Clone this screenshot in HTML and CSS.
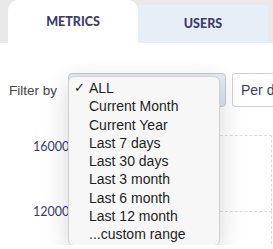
FILE: index.html
```html
<!DOCTYPE html>
<html>
    <head>
        <title>Metrics</title>
        <meta charset="UTF-8">
        <link rel="stylesheet" href="styles.css">
    </head>
    <body>
        <div class='tabs'>
            <div class='tab active'>METRICS</div>
            <div class='tab'>USERS</div>
        </div>

        <div class='panel'>
            <div class='filters'>
                <span class='filter_label'>Filter by</span>
                <div class='select_box'></div>
                <div class='per_box'>Per day</div>

                <ul class='menu'>
                    <li><span class='check'>&#10003;</span>ALL</li>
                    <li>Current Month</li>
                    <li>Current Year</li>
                    <li>Last 7 days</li>
                    <li>Last 30 days</li>
                    <li>Last 3 month</li>
                    <li>Last 6 month</li>
                    <li>Last 12 month</li>
                    <li>...custom range</li>
                </ul>
            </div>

            <div class='chart'>
                <div class='y_axis'>
                    <span class='tick'>16000</span>
                    <span class='tick'>12000</span>
                </div>
                <div class='plot'>
                    <div class='grid_row'></div>
                    <div class='grid_row'></div>
                    <div class='bar'></div>
                </div>
            </div>
        </div>
    </body>
</html>
```

FILE: styles.css
```css
body {
    margin: 0;
    background: #ffffff;
    font-family: "Liberation Sans", Arial, sans-serif;
    overflow: hidden;
}
.tabs {
    display: flex;
    align-items: flex-end;
    height: 43px;
    padding: 0 5px 0 8px;
    background: #e9e9e9;
}
.tab {
    flex-shrink: 0;
    width: 130px;
    height: 38px;
    display: flex;
    align-items: center;
    justify-content: center;
    padding-bottom: 2px;
    box-sizing: border-box;
    background: #e8eef6;
    border-radius: 0 4px 0 0;
    font-family: Lato, sans-serif;
    font-weight: 900;
    font-size: 12.5px;
    color: #3e3c6a;
}
.tab.active {
    height: 43px;
    padding-bottom: 0;
    background: #ffffff;
    border-radius: 10px 10px 0 0;
}
.panel {
    padding: 30px 0 0 9px;
}
.filters {
    position: relative;
    display: flex;
    align-items: center;
    height: 34px;
}
.filter_label {
    flex-shrink: 0;
    width: 59px;
    font-size: 13.5px;
    color: #444444;
}
.select_box {
    flex-shrink: 0;
    width: 158px;
    height: 34px;
    box-sizing: border-box;
    border: 1px solid #c3cbd4;
    border-radius: 4px;
    background: linear-gradient(#e9edf2, #dde4ec);
}
.per_box {
    flex-shrink: 0;
    margin-left: 6px;
    height: 34px;
    width: 80px;
    box-sizing: border-box;
    padding: 0 8px;
    display: flex;
    align-items: center;
    border: 1px solid #cfd3d8;
    border-radius: 3px;
    font-size: 14px;
    color: #3b3a70;
    white-space: nowrap;
}
.menu {
    position: absolute;
    left: 59px;
    top: 3px;
    z-index: 2;
    width: 150px;
    margin: 0;
    padding: 2px 0 1px 0;
    list-style: none;
    background: #f7f7f7;
    border: 1px solid #d2d2d2;
    border-radius: 6px;
    box-shadow: 0 6px 26px rgba(0, 0, 0, 0.16);
}
.menu li {
    position: relative;
    height: 18.3px;
    line-height: 18.3px;
    padding-left: 20px;
    font-size: 14px;
    color: #1e1e1e;
    white-space: nowrap;
}
.check {
    position: absolute;
    left: 5px;
    font-size: 13px;
}
.chart {
    display: flex;
    margin-top: 28px;
    height: 110px;
}
.y_axis {
    flex-shrink: 0;
    width: 63px;
    padding: 5px 0 0 24px;
    box-sizing: border-box;
}
.tick {
    display: block;
    height: 65px;
    font-family: Lato, sans-serif;
    font-size: 12.5px;
    color: #3b3a75;
    line-height: 14px;
}
.plot {
    position: relative;
    flex: 1;
    border-left: 1px solid #dcdcdc;
}
.grid_row {
    height: 75px;
    border-top: 1.5px dashed #dcdcdc;
    border-right: 1.5px dashed #dcdcdc;
    margin-left: 147px;
    margin-right: 1px;
}
.grid_row + .grid_row {
    height: 32px;
}
.bar {
    position: absolute;
    left: 36px;
    bottom: 0;
    width: 2px;
    height: 14px;
    background: #1a8fd6;
}
```
